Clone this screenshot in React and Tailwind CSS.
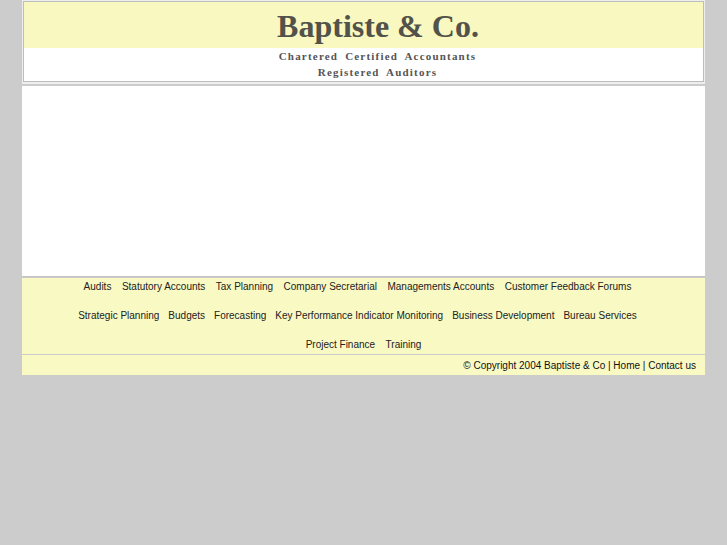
import React from 'react';

const row1 = ['Audits', 'Statutory Accounts', 'Tax Planning', 'Company Secretarial', 'Managements Accounts', 'Customer Feedback Forums'];
const row2 = ['Strategic Planning', 'Budgets', 'Forecasting', 'Key Performance Indicator Monitoring', 'Business Development', 'Bureau Services'];
const row3 = ['Project Finance', 'Training'];

const NavRow = ({ items, cls }) => (
  <div className={`flex justify-center h-[14px] items-center ${cls}`}>
    {items.map(item => (
      <a key={item} href="#" className="text-[#222] no-underline">{item}</a>
    ))}
  </div>
);

const App = () => {
  return (
    <div className="bg-[#cccccc] min-h-[545px] w-full">
      <div className="ml-[22px] w-[683px]">
        {/* header banner */}
        <div className="bg-[#eeeeee] p-px pb-[2px]">
          <div className="border border-[#bdbdbd]">
            <div className="bg-[#f8f8c0] h-[46px] flex items-center justify-center pl-[29px] pt-[2px]">
              <span
                className="text-[32px] font-bold text-[#52524a] leading-none"
                style={{ fontFamily: '"Liberation Serif", "Times New Roman", serif' }}
              >
                Baptiste &amp; Co.
              </span>
            </div>
            <div
              className="bg-white h-[33px] flex flex-col items-center justify-center pl-[28px] pb-[2px] text-[11px] font-bold text-[#555] leading-[16px] tracking-[1.2px] [word-spacing:3px]"
              style={{ fontFamily: '"Liberation Serif", "Times New Roman", serif' }}
            >
              <div>Chartered Certified Accountants</div>
              <div>Registered Auditors</div>
            </div>
          </div>
        </div>

        {/* main content */}
        <div className="bg-white h-[191px] mt-[2px] border-b border-[#c4c4c4]"></div>

        {/* nav */}
        <div
          className="bg-[#f9f9c4] mt-px pt-[2px] pb-[2px] flex flex-col gap-[15px] text-[10px] leading-none"
          style={{ fontFamily: '"Liberation Sans", Arial, sans-serif' }}
        >
          <NavRow items={row1} cls="gap-[10.5px] -translate-x-[6px]" />
          <NavRow items={row2} cls="gap-[9px] -translate-x-[6px]" />
          <NavRow items={row3} cls="gap-[10.5px]" />
        </div>

        {/* footer */}
        <div
          className="bg-[#f9f9c4] mt-px h-[20px] flex items-center justify-end pr-[9px] text-[10px] text-[#111]"
          style={{ fontFamily: '"Liberation Sans", Arial, sans-serif' }}
        >
          © Copyright 2004 Baptiste &amp; Co | Home | Contact us
        </div>
      </div>
    </div>
  );
};

export default App;
